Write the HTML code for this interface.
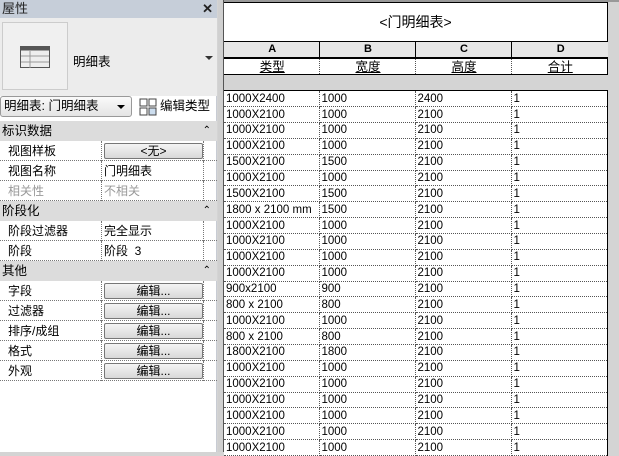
<!DOCTYPE html>
<html><head><meta charset="utf-8"><style>
*{margin:0;padding:0;box-sizing:border-box}
body{width:619px;height:452px;overflow:hidden;background:#d4d4d4;font-family:"Liberation Sans","Noto Sans CJK SC",sans-serif;font-size:12px;color:#000;position:relative}
.abs{position:absolute}
#left{left:0;top:0;width:217px;height:452px;background:#fff;border-right:1px solid #c8ccd4}
#tb{left:0;top:0;width:217px;height:18px;background:#c6ced9;font-size:13px;padding-left:2px;line-height:18px;color:#222}
#prev{left:0;top:18px;width:217px;height:78px;background:#ececec}
.row{position:absolute;left:0;width:217px;height:20px;line-height:20px}
.sec{background:#dcdcdc;padding-left:2px;font-size:12.5px}
.sec span{position:absolute;right:6px;font-size:10px}
.prop{border-bottom:1px dotted #777}
.prop .k{position:absolute;left:8px;top:0}
.prop .v{position:absolute;left:101px;top:0;width:103px;height:20px;border-left:1px dotted #777;border-right:1px dotted #777;padding-left:2px}
.btn{position:absolute;left:104px;top:2px;width:99px;height:16px;border:1px solid #777;border-radius:2px;background:linear-gradient(#f4f4f4,#d8d8d8);text-align:center;line-height:14px;font-size:12px}
#tbl{left:224px;top:2px;width:384px}
table{border-collapse:collapse;width:384px;table-layout:fixed}
td{height:15.87px;font-size:11.5px;line-height:14px;padding:0 0 0 2px;border-right:1px dotted #555;border-bottom:1px dotted #555;white-space:nowrap;overflow:hidden}
td:last-child{border-right:none}
</style></head><body>
<div id="left" class="abs">
<div id="tb" class="abs">屋性<span style="position:absolute;right:4px;top:0;font-weight:bold;font-size:13px">✕</span></div>
<div id="prev" class="abs">
 <div class="abs" style="left:2px;top:4px;width:66px;height:68px;background:#f0f0f0;border:1px solid #ccc"></div>
 <svg class="abs" style="left:20px;top:28px" width="30" height="22"><rect x="0.5" y="0.5" width="29" height="21" fill="#eee" stroke="#555"/><rect x="0.5" y="0.5" width="29" height="4" fill="#555"/><line x1="10" y1="5" x2="10" y2="22" stroke="#999"/><line x1="1" y1="10" x2="29" y2="10" stroke="#999"/><line x1="1" y1="16" x2="29" y2="16" stroke="#999"/></svg>
 <div class="abs" style="left:73px;top:33px;font-size:12.5px">明细表</div>
 <div class="abs" style="left:205px;top:38px;width:0;height:0;border-left:4px solid transparent;border-right:4px solid transparent;border-top:4px solid #333"></div>
</div>
<div class="abs" style="left:0;top:96px;width:132px;height:21px;border:1px solid #999;border-radius:3px;background:linear-gradient(#fafafa,#e4e4e4);padding-left:3px;line-height:19px;font-size:12.5px">明细表: 门明细表<span style="position:absolute;right:6px;top:8px;border-left:4px solid transparent;border-right:4px solid transparent;border-top:4px solid #000"></span></div>
<svg class="abs" style="left:139px;top:98px" width="18" height="18"><rect x="1" y="1" width="7" height="7" fill="#fff" stroke="#444"/><rect x="10" y="1" width="7" height="7" fill="#fff" stroke="#444"/><rect x="1" y="10" width="7" height="7" fill="#fff" stroke="#444"/><rect x="10" y="10" width="7" height="7" fill="#cde" stroke="#444"/></svg>
<div class="abs" style="left:160px;top:98px;font-size:12.5px;line-height:16px">编辑类型</div>
<div class="row sec" style="top:121px">标识数据<span>⌃</span></div>
<div class="row prop" style="top:141px"><span class="k">视图样板</span><div class="v"></div><div class="btn">&lt;无&gt;</div></div>
<div class="row prop" style="top:161px"><span class="k">视图名称</span><div class="v">门明细表</div></div>
<div class="row prop" style="top:181px;color:#999"><span class="k">相关性</span><div class="v">不相关</div></div>
<div class="row sec" style="top:201px">阶段化<span>⌃</span></div>
<div class="row prop" style="top:221px"><span class="k">阶段过滤器</span><div class="v">完全显示</div></div>
<div class="row prop" style="top:241px"><span class="k">阶段</span><div class="v">阶段&nbsp; 3</div></div>
<div class="row sec" style="top:261px">其他<span>⌃</span></div>
<div class="row prop" style="top:281px"><span class="k">字段</span><div class="v"></div><div class="btn">编辑...</div></div>
<div class="row prop" style="top:301px"><span class="k">过滤器</span><div class="v"></div><div class="btn">编辑...</div></div>
<div class="row prop" style="top:321px"><span class="k">排序/成组</span><div class="v"></div><div class="btn">编辑...</div></div>
<div class="row prop" style="top:341px"><span class="k">格式</span><div class="v"></div><div class="btn">编辑...</div></div>
<div class="row prop" style="top:361px"><span class="k">外观</span><div class="v"></div><div class="btn">编辑...</div></div>
</div>
<div class="abs" style="left:218px;top:0;width:5px;height:452px;background:#d0d0d0"></div>
<div class="abs" style="left:223px;top:0;width:1px;height:452px;background:#555"></div>
<div class="abs" style="left:224px;top:0;width:395px;height:2px;background:#999"></div>
<div id="tbl" class="abs">
<div style="height:40px;background:#fff;border:1px solid #000;border-left:none;text-align:center;line-height:38px;font-size:14px">&lt;门明细表&gt;</div>
<table style="background:#e6e6e6"><tr>
<td style="width:95px;text-align:center;font-weight:bold;border-right:1px solid #000;border-bottom:2px solid #000;font-size:11px">A</td>
<td style="width:96px;text-align:center;font-weight:bold;border-right:1px solid #000;border-bottom:2px solid #000;font-size:11px">B</td>
<td style="width:96px;text-align:center;font-weight:bold;border-right:1px solid #000;border-bottom:2px solid #000;font-size:11px">C</td>
<td style="text-align:center;font-weight:bold;border-bottom:2px solid #000;font-size:11px">D</td></tr></table>
<table style="background:#fff;border-right:1px solid #000;border-bottom:1px solid #000"><tr>
<td style="width:95px;text-align:center;text-decoration:underline;font-size:12.5px">类型</td><td style="width:96px;text-align:center;text-decoration:underline;font-size:12.5px">宽度</td><td style="width:96px;text-align:center;text-decoration:underline;font-size:12.5px">高度</td><td style="text-align:center;text-decoration:underline;font-size:12.5px">合计</td></tr></table>
<div style="height:15px;background:#d4d4d4"></div>
<table style="background:#fff;border-top:1px solid #000;border-right:1px solid #000">
<colgroup><col style="width:95px"><col style="width:96px"><col style="width:96px"><col></colgroup>
<tr><td>1000X2400</td><td>1000</td><td>2400</td><td>1</td></tr>
<tr><td>1000X2100</td><td>1000</td><td>2100</td><td>1</td></tr>
<tr><td>1000X2100</td><td>1000</td><td>2100</td><td>1</td></tr>
<tr><td>1000X2100</td><td>1000</td><td>2100</td><td>1</td></tr>
<tr><td>1500X2100</td><td>1500</td><td>2100</td><td>1</td></tr>
<tr><td>1000X2100</td><td>1000</td><td>2100</td><td>1</td></tr>
<tr><td>1500X2100</td><td>1500</td><td>2100</td><td>1</td></tr>
<tr><td>1800 x 2100 mm</td><td>1500</td><td>2100</td><td>1</td></tr>
<tr><td>1000X2100</td><td>1000</td><td>2100</td><td>1</td></tr>
<tr><td>1000X2100</td><td>1000</td><td>2100</td><td>1</td></tr>
<tr><td>1000X2100</td><td>1000</td><td>2100</td><td>1</td></tr>
<tr><td>1000X2100</td><td>1000</td><td>2100</td><td>1</td></tr>
<tr><td>900x2100</td><td>900</td><td>2100</td><td>1</td></tr>
<tr><td>800 x 2100</td><td>800</td><td>2100</td><td>1</td></tr>
<tr><td>1000X2100</td><td>1000</td><td>2100</td><td>1</td></tr>
<tr><td>800 x 2100</td><td>800</td><td>2100</td><td>1</td></tr>
<tr><td>1800X2100</td><td>1800</td><td>2100</td><td>1</td></tr>
<tr><td>1000X2100</td><td>1000</td><td>2100</td><td>1</td></tr>
<tr><td>1000X2100</td><td>1000</td><td>2100</td><td>1</td></tr>
<tr><td>1000X2100</td><td>1000</td><td>2100</td><td>1</td></tr>
<tr><td>1000X2100</td><td>1000</td><td>2100</td><td>1</td></tr>
<tr><td>1000X2100</td><td>1000</td><td>2100</td><td>1</td></tr>
<tr><td>1000X2100</td><td>1000</td><td>2100</td><td>1</td></tr>
</table>
</div>
</body></html>
